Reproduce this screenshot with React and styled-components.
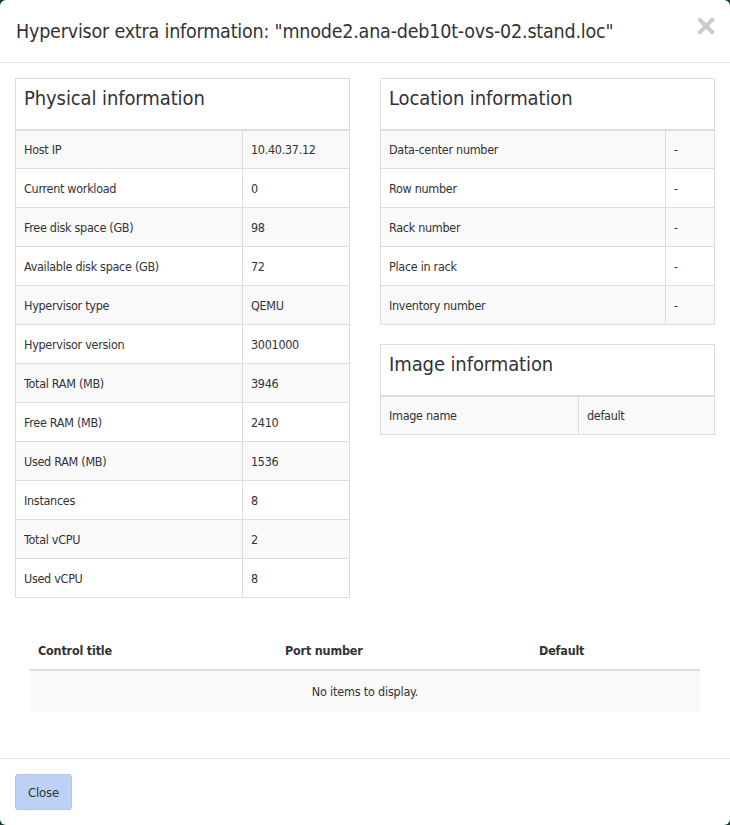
import styled, { createGlobalStyle } from 'styled-components'

const GlobalStyle = createGlobalStyle`
	html, body {
		margin: 0;
		background: #0c3f33;
	}
	body {
		font-family: "DejaVu Sans Condensed", "DejaVu Sans", "Liberation Sans", sans-serif;
		color: #333;
	}
`

const Modal = styled.div`
	width: 730px;
	height: 825px;
	background: #fff;
	border-radius: 6px;
	display: flex;
	flex-direction: column;
	overflow: hidden;
`

const Header = styled.div`
	height: 62px;
	border-bottom: 1px solid #e5e5e5;
	padding: 0 15px 0 16px;
	display: flex;
	align-items: center;
	justify-content: space-between;
	box-sizing: content-box;
`

const Title = styled.h4`
	margin: 0;
	font-size: 19.5px;
	letter-spacing: -0.2px;
	font-weight: normal;
	color: #333;
	white-space: nowrap;
`

const CloseX = styled.button`
	border: none;
	background: none;
	padding: 0;
	width: 18px;
	height: 18px;
	margin-top: -10px;
	cursor: pointer;
`

const Body = styled.div`
	flex: 1;
	padding: 15px;
`

const Columns = styled.div`
	display: grid;
	grid-template-columns: 335px 335px;
	column-gap: 30px;
	align-items: start;
`

const Stack = styled.div`
	display: flex;
	flex-direction: column;
	gap: 19px;
`

const InfoTable = styled.table`
	width: 100%;
	border-collapse: collapse;
	border: 1px solid #ddd;
	table-layout: fixed;
	font-size: 12.5px;
	letter-spacing: -0.3px;
`

const PanelHead = styled.th`
	text-align: left;
	font-weight: normal;
	font-size: 20px;
	letter-spacing: -0.1px;
	height: 51px;
	padding: 7px 8px 0;
	vertical-align: top;
	box-sizing: border-box;
	border-bottom: 2px solid #ddd;
`

const Row = styled.tr`
	background: ${(props) => props.striped ? '#f9f9f9' : '#fff'};
`

const Cell = styled.td`
	height: 39px;
	padding: 0 8px;
	border-top: 1px solid #ddd;
	border-left: 1px solid #ddd;
	box-sizing: border-box;
`

const ListSection = styled.div`
	margin: 33px 15px 0;
`

const ListTable = styled.table`
	width: 100%;
	border-collapse: collapse;
	table-layout: fixed;
	font-size: 12.5px;
	letter-spacing: -0.2px;
`

const ListHead = styled.th`
	text-align: left;
	font-weight: bold;
	height: 38px;
	padding: 0 8px;
	border-bottom: 2px solid #ddd;
`

const EmptyCell = styled.td`
	height: 39px;
	text-align: center;
	background: #f9f9f9;
`

const Footer = styled.div`
	border-top: 1px solid #e5e5e5;
	padding: 15px;
	display: flex;
`

const Button = styled.button`
	font-family: inherit;
	font-size: 13px;
	letter-spacing: -0.2px;
	color: #333;
	background: #bdd1f6;
	border: 1px solid #aec6f2;
	border-radius: 3px;
	width: 57px;
	height: 36px;
	padding: 0;
	cursor: pointer;
`

const physical = [
	['Host IP', '10.40.37.12'],
	['Current workload', '0'],
	['Free disk space (GB)', '98'],
	['Available disk space (GB)', '72'],
	['Hypervisor type', 'QEMU'],
	['Hypervisor version', '3001000'],
	['Total RAM (MB)', '3946'],
	['Free RAM (MB)', '2410'],
	['Used RAM (MB)', '1536'],
	['Instances', '8'],
	['Total vCPU', '2'],
	['Used vCPU', '8'],
]

const location = [
	['Data-center number', '-'],
	['Row number', '-'],
	['Rack number', '-'],
	['Place in rack', '-'],
	['Inventory number', '-'],
]

const image = [['Image name', 'default']]

function Panel({ title, rows, labelWidth }) {
	return (
		<InfoTable>
			<colgroup>
				<col style={{ width: labelWidth }} />
				<col />
			</colgroup>
			<thead>
				<tr><PanelHead colSpan={2}>{title}</PanelHead></tr>
			</thead>
			<tbody>
				{rows.map(([label, value], i) => (
					<Row key={label} striped={i % 2 === 0}>
						<Cell>{label}</Cell>
						<Cell>{value}</Cell>
					</Row>
				))}
			</tbody>
		</InfoTable>
	)
}

export default function App() {
	return (<>
		<GlobalStyle />
		<Modal>
			<Header>
				<Title>Hypervisor extra information: "mnode2.ana-deb10t-ovs-02.stand.loc"</Title>
				<CloseX aria-label="Close">
					<svg width="18" height="18" viewBox="0 0 18 18">
						<path d="M3 3 L15 15 M15 3 L3 15" stroke="#cbcbcb" strokeWidth="4" strokeLinecap="square" />
					</svg>
				</CloseX>
			</Header>
			<Body>
				<Columns>
					<Panel title="Physical information" rows={physical} labelWidth="227px" />
					<Stack>
						<Panel title="Location information" rows={location} labelWidth="285px" />
						<Panel title="Image information" rows={image} labelWidth="198px" />
					</Stack>
				</Columns>
				<ListSection>
					<ListTable>
						<colgroup>
							<col style={{ width: '247px' }} />
							<col style={{ width: '254px' }} />
							<col />
						</colgroup>
						<thead>
							<tr>
								<ListHead>Control title</ListHead>
								<ListHead>Port number</ListHead>
								<ListHead>Default</ListHead>
							</tr>
						</thead>
						<tbody>
							<tr><EmptyCell colSpan={3}>No items to display.</EmptyCell></tr>
						</tbody>
					</ListTable>
				</ListSection>
			</Body>
			<Footer>
				<Button>Close</Button>
			</Footer>
		</Modal>
	</>)
}
